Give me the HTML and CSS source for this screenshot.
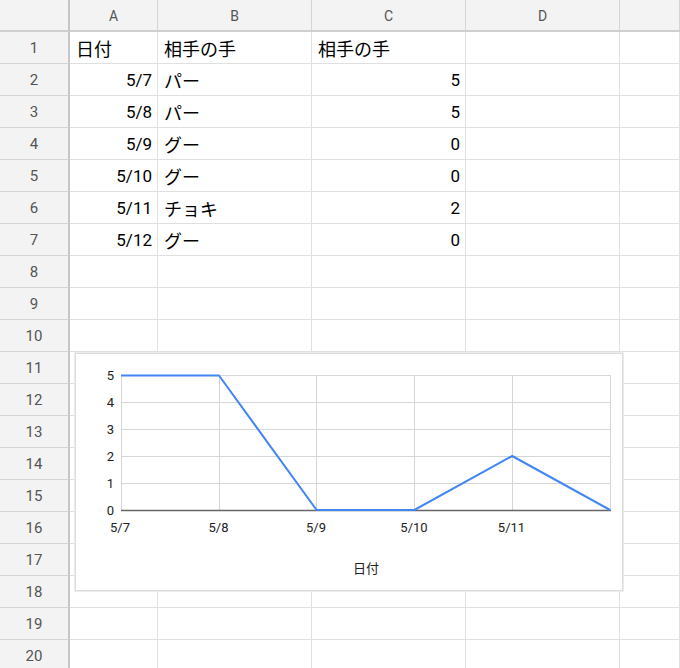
FILE: index.html
```html
<!DOCTYPE html>
<html lang="ja">
<head>
<meta charset="utf-8">
<title>Sheet</title>
<link rel="stylesheet" href="styles.css">
</head>
<body>
<div class="sheet">
  <div class="grid">
    <div class="hd corner"></div><div class="hd">A</div><div class="hd">B</div><div class="hd">C</div><div class="hd">D</div><div class="hd"></div>

    <div class="rh">1</div><div class="c jp">日付</div><div class="c jp">相手の手</div><div class="c jp">相手の手</div><div class="c"></div><div class="c"></div>
    <div class="rh">2</div><div class="c num">5/7</div><div class="c jp">パー</div><div class="c num">5</div><div class="c"></div><div class="c"></div>
    <div class="rh">3</div><div class="c num">5/8</div><div class="c jp">パー</div><div class="c num">5</div><div class="c"></div><div class="c"></div>
    <div class="rh">4</div><div class="c num">5/9</div><div class="c jp">グー</div><div class="c num">0</div><div class="c"></div><div class="c"></div>
    <div class="rh">5</div><div class="c num">5/10</div><div class="c jp">グー</div><div class="c num">0</div><div class="c"></div><div class="c"></div>
    <div class="rh">6</div><div class="c num">5/11</div><div class="c jp">チョキ</div><div class="c num">2</div><div class="c"></div><div class="c"></div>
    <div class="rh">7</div><div class="c num">5/12</div><div class="c jp">グー</div><div class="c num">0</div><div class="c"></div><div class="c"></div>
    <div class="rh">8</div><div class="c"></div><div class="c"></div><div class="c"></div><div class="c"></div><div class="c"></div>
    <div class="rh">9</div><div class="c"></div><div class="c"></div><div class="c"></div><div class="c"></div><div class="c"></div>
    <div class="rh">10</div><div class="c"></div><div class="c"></div><div class="c"></div><div class="c"></div><div class="c"></div>
    <div class="rh">11</div><div class="c"></div><div class="c"></div><div class="c"></div><div class="c"></div><div class="c"></div>
    <div class="rh">12</div><div class="c"></div><div class="c"></div><div class="c"></div><div class="c"></div><div class="c"></div>
    <div class="rh">13</div><div class="c"></div><div class="c"></div><div class="c"></div><div class="c"></div><div class="c"></div>
    <div class="rh">14</div><div class="c"></div><div class="c"></div><div class="c"></div><div class="c"></div><div class="c"></div>
    <div class="rh">15</div><div class="c"></div><div class="c"></div><div class="c"></div><div class="c"></div><div class="c"></div>
    <div class="rh">16</div><div class="c"></div><div class="c"></div><div class="c"></div><div class="c"></div><div class="c"></div>
    <div class="rh">17</div><div class="c"></div><div class="c"></div><div class="c"></div><div class="c"></div><div class="c"></div>
    <div class="rh">18</div><div class="c"></div><div class="c"></div><div class="c"></div><div class="c"></div><div class="c"></div>
    <div class="rh">19</div><div class="c"></div><div class="c"></div><div class="c"></div><div class="c"></div><div class="c"></div>
    <div class="rh">20</div><div class="c"></div><div class="c"></div><div class="c"></div><div class="c"></div><div class="c"></div>
  </div>

  <div class="chart">
    <svg class="chart-svg" width="548" height="238" viewBox="75 353 548 238" xmlns="http://www.w3.org/2000/svg">
      <g stroke="#d6d6d6" stroke-width="1" fill="none">
        <line x1="121" y1="375.5" x2="610" y2="375.5"/>
        <line x1="121" y1="402.5" x2="610" y2="402.5"/>
        <line x1="121" y1="429.5" x2="610" y2="429.5"/>
        <line x1="121" y1="456.5" x2="610" y2="456.5"/>
        <line x1="121" y1="483.5" x2="610" y2="483.5"/>
        <line x1="121.5" y1="375" x2="121.5" y2="510"/>
        <line x1="219.5" y1="375" x2="219.5" y2="510"/>
        <line x1="316.5" y1="375" x2="316.5" y2="510"/>
        <line x1="414.5" y1="375" x2="414.5" y2="510"/>
        <line x1="512.5" y1="375" x2="512.5" y2="510"/>
        <line x1="610.5" y1="375" x2="610.5" y2="510"/>
      </g>
      <line x1="121" y1="510.5" x2="611" y2="510.5" stroke="#666" stroke-width="1.5"/>
      <polyline points="121,375.5 219,375.5 316.6,510 414.4,510 512.2,456 610,510" fill="none" stroke="#4285f4" stroke-width="2" stroke-linejoin="round"/>
      <g class="ylab" text-anchor="end">
        <text x="114" y="380">5</text>
        <text x="114" y="407">4</text>
        <text x="114" y="434">3</text>
        <text x="114" y="461">2</text>
        <text x="114" y="488">1</text>
        <text x="114" y="515">0</text>
      </g>
      <g class="xlab" text-anchor="middle">
        <text x="120" y="532">5/7</text>
        <text x="218.5" y="532">5/8</text>
        <text x="316" y="532">5/9</text>
        <text x="414" y="532">5/10</text>
        <text x="511.5" y="532">5/11</text>
      </g>
      <text class="xtitle" x="366" y="573" text-anchor="middle">日付</text>
    </svg>
  </div>
</div>
</body>
</html>
```
FILE: styles.css
```css
html, body {
  margin: 0;
  padding: 0;
  background: #fff;
  overflow: hidden;
}
.sheet {
  position: relative;
  width: 680px;
  height: 668px;
  overflow: hidden;
  font-family: Roboto, "Noto Sans CJK JP", sans-serif;
}
.grid {
  display: grid;
  grid-template-columns: 70px 88px 154px 154px 154px 60px;
  grid-auto-rows: 32px;
}
.grid > div {
  box-sizing: border-box;
  display: flex;
  align-items: center;
  overflow: hidden;
  white-space: nowrap;
}
.hd {
  background: #f3f3f3;
  border-right: 1px solid #d4d4d4;
  border-bottom: 2px solid #cfcfcf;
  justify-content: center;
  color: #555;
  font-size: 14px;
  padding-top: 2px;
}
.corner {
  border-right: 2px solid #c6c6c6;
}
.rh {
  background: #f3f3f3;
  border-right: 2px solid #c6c6c6;
  border-bottom: 1px solid #d4d4d4;
  justify-content: center;
  color: #555;
  font-size: 15px;
}
.c {
  border-right: 1px solid #e0e0e0;
  border-bottom: 1px solid #e0e0e0;
  padding: 0 5px 0 6px;
  font-size: 17px;
  color: #000;
}
.c.jp {
  font-size: 18px;
}
.num {
  justify-content: flex-end;
}
.chart {
  position: absolute;
  left: 75px;
  top: 353px;
  width: 548px;
  height: 238px;
  background: #fff;
  box-shadow: inset 0 0 0 1px #dcdcdc, 0 0 0 1px #ececec;
}
.chart-svg {
  display: block;
}
.ylab text, .xlab text {
  font-family: Roboto, sans-serif;
  font-size: 13px;
  fill: #222;
}
.xtitle {
  font-family: Roboto, "Noto Sans CJK JP", sans-serif;
  font-size: 13px;
  fill: #222;
}
```
